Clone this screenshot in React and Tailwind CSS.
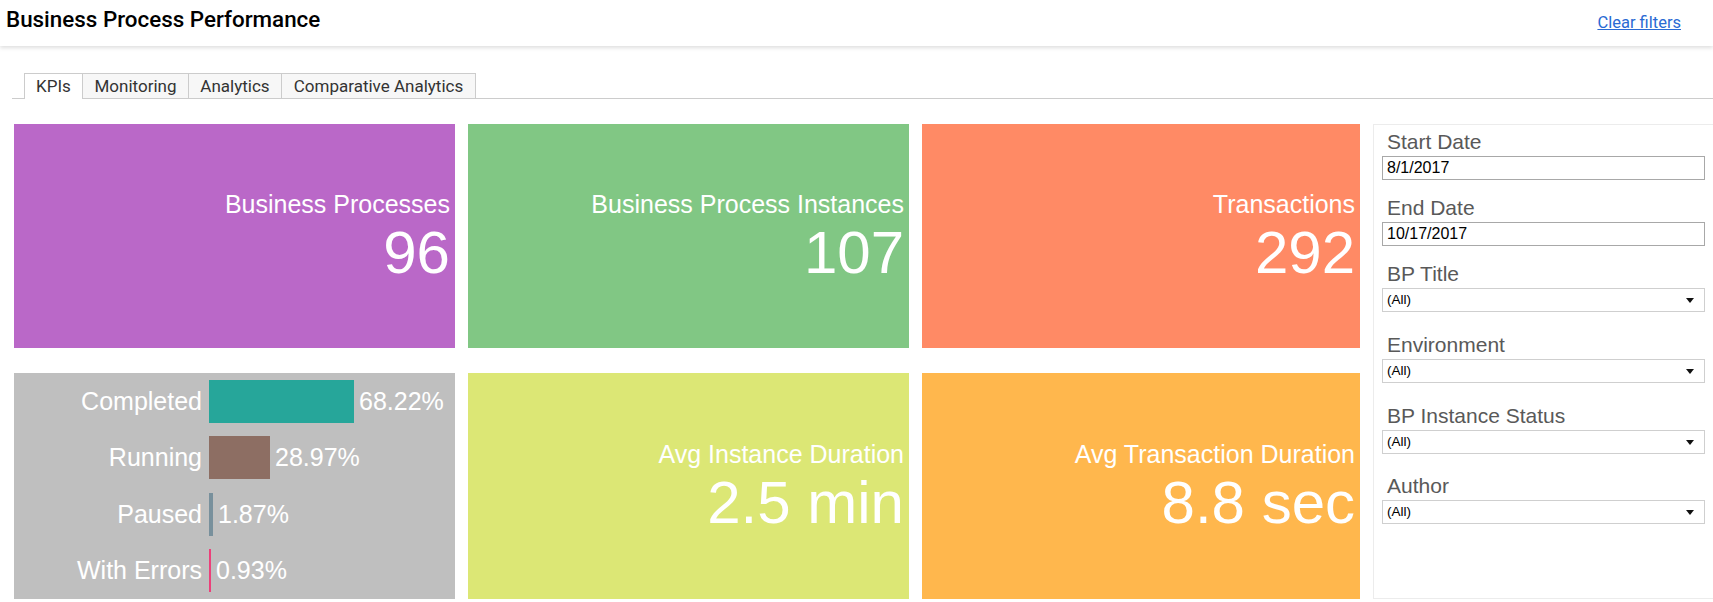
import React from 'react';

const kpiTop = [
  { label: 'Business Processes', value: '96', bg: 'bg-[#ba68c8]' },
  { label: 'Business Process Instances', value: '107', bg: 'bg-[#81c784]' },
  { label: 'Transactions', value: '292', bg: 'bg-[#ff8a65]' },
];

const statuses = [
  { label: 'Completed', pct: '68.22%', width: 145, color: 'bg-[#26a69a]' },
  { label: 'Running', pct: '28.97%', width: 61, color: 'bg-[#8d6e63]' },
  { label: 'Paused', pct: '1.87%', width: 4, color: 'bg-[#78909c]' },
  { label: 'With Errors', pct: '0.93%', width: 2, color: 'bg-[#ec407a]' },
];

const tabs = [
  { name: 'KPIs', w: 'w-[58px]', active: true },
  { name: 'Monitoring', w: 'w-[106px]' },
  { name: 'Analytics', w: 'w-[93px]' },
  { name: 'Comparative Analytics', w: 'w-[195px]' },
];

const KpiTile = ({ label, value, bg }) => (
  <div className={`${bg} flex flex-col items-end justify-center pr-[5px] text-white font-['Liberation_Sans',Arial,sans-serif]`}>
    <div className="text-[25px] leading-[29px] whitespace-nowrap">{label}</div>
    <div className="text-[60px] leading-[60px] mt-[4px] whitespace-nowrap">{value}</div>
  </div>
);

const StatusTile = () => (
  <div className="bg-[#bfbfbf] flex flex-col text-white font-['Liberation_Sans',Arial,sans-serif] text-[25px]">
    {statuses.map((s) => (
      <div key={s.label} className="flex-1 flex items-center">
        <div className="w-[188px] text-right whitespace-nowrap">{s.label}</div>
        <div className={`${s.color} h-[43px] ml-[7px]`} style={{ width: s.width }} />
        <div className="ml-[5px] whitespace-nowrap">{s.pct}</div>
      </div>
    ))}
  </div>
);

const Caret = () => (
  <svg width="8" height="5" viewBox="0 0 8 5" className="absolute right-[10px] top-[9px]">
    <path d="M0 0h8L4 5z" fill="#111" />
  </svg>
);

const Field = ({ label, value, select, mt }) => (
  <div className={mt}>
    <div className="text-[21px] leading-[23px] text-[#595959] pl-[13px]">{label}</div>
    <div
      className={`relative mx-[8px] mt-[3px] h-[24px] bg-white border ${select ? 'border-[#cfcfcf] text-[13.5px]' : 'border-[#a8a8a8] text-[16px]'} text-black leading-[22px] pl-[4px]`}
    >
      {value}
      {select && <Caret />}
    </div>
  </div>
);

export default function App() {
  return (
    <div className="w-[1713px] h-[602px] bg-white overflow-hidden">
      <header className="h-[46px] flex justify-between shadow-[0_2px_4px_rgba(0,0,0,0.13)] font-['Roboto',sans-serif]">
        <h1 className="pl-[6px] pt-[6px] text-[22.4px] leading-[26px] font-medium text-black">Business Process Performance</h1>
        <a href="#" className="pt-[13px] pr-[32px] text-[16.5px] leading-[19px] text-[#2a6ad3] underline">Clear filters</a>
      </header>

      <nav className="ml-[12px] mt-[27px] border-b border-[#cccccc] flex pl-[12px] font-['Roboto',sans-serif] text-[17px] text-[#333]">
        {tabs.map((t, i) => (
          <div
            key={t.name}
            className={`${t.w} h-[25px] leading-[24px] text-center border-t border-l border-[#cccccc] ${i === tabs.length - 1 ? 'border-r' : ''} ${t.active ? 'bg-white h-[26px] -mb-px' : 'bg-[#f7f7f7]'}`}
          >
            {t.name}
          </div>
        ))}
      </nav>

      <main className="flex items-start pl-[14px] mt-[25px]">
        <div className="grid grid-cols-[441px_441px_438px] grid-rows-[224px_226px] gap-x-[13px] gap-y-[25px]">
          {kpiTop.map((k) => (
            <KpiTile key={k.label} {...k} />
          ))}
          <StatusTile />
          <KpiTile label="Avg Instance Duration" value="2.5 min" bg="bg-[#dce775]" />
          <KpiTile label="Avg Transaction Duration" value="8.8 sec" bg="bg-[#ffb74d]" />
        </div>

        <aside className="ml-[13px] flex-1 h-[475px] border border-r-0 border-[#ececec] font-['Liberation_Sans',Arial,sans-serif]">
          <Field label="Start Date" value="8/1/2017" mt="mt-[5px]" />
          <Field label="End Date" value="10/17/2017" mt="mt-[16px]" />
          <Field label="BP Title" value="(All)" select mt="mt-[16px]" />
          <Field label="Environment" value="(All)" select mt="mt-[21px]" />
          <Field label="BP Instance Status" value="(All)" select mt="mt-[21px]" />
          <Field label="Author" value="(All)" select mt="mt-[20px]" />
        </aside>
      </main>
    </div>
  );
}
